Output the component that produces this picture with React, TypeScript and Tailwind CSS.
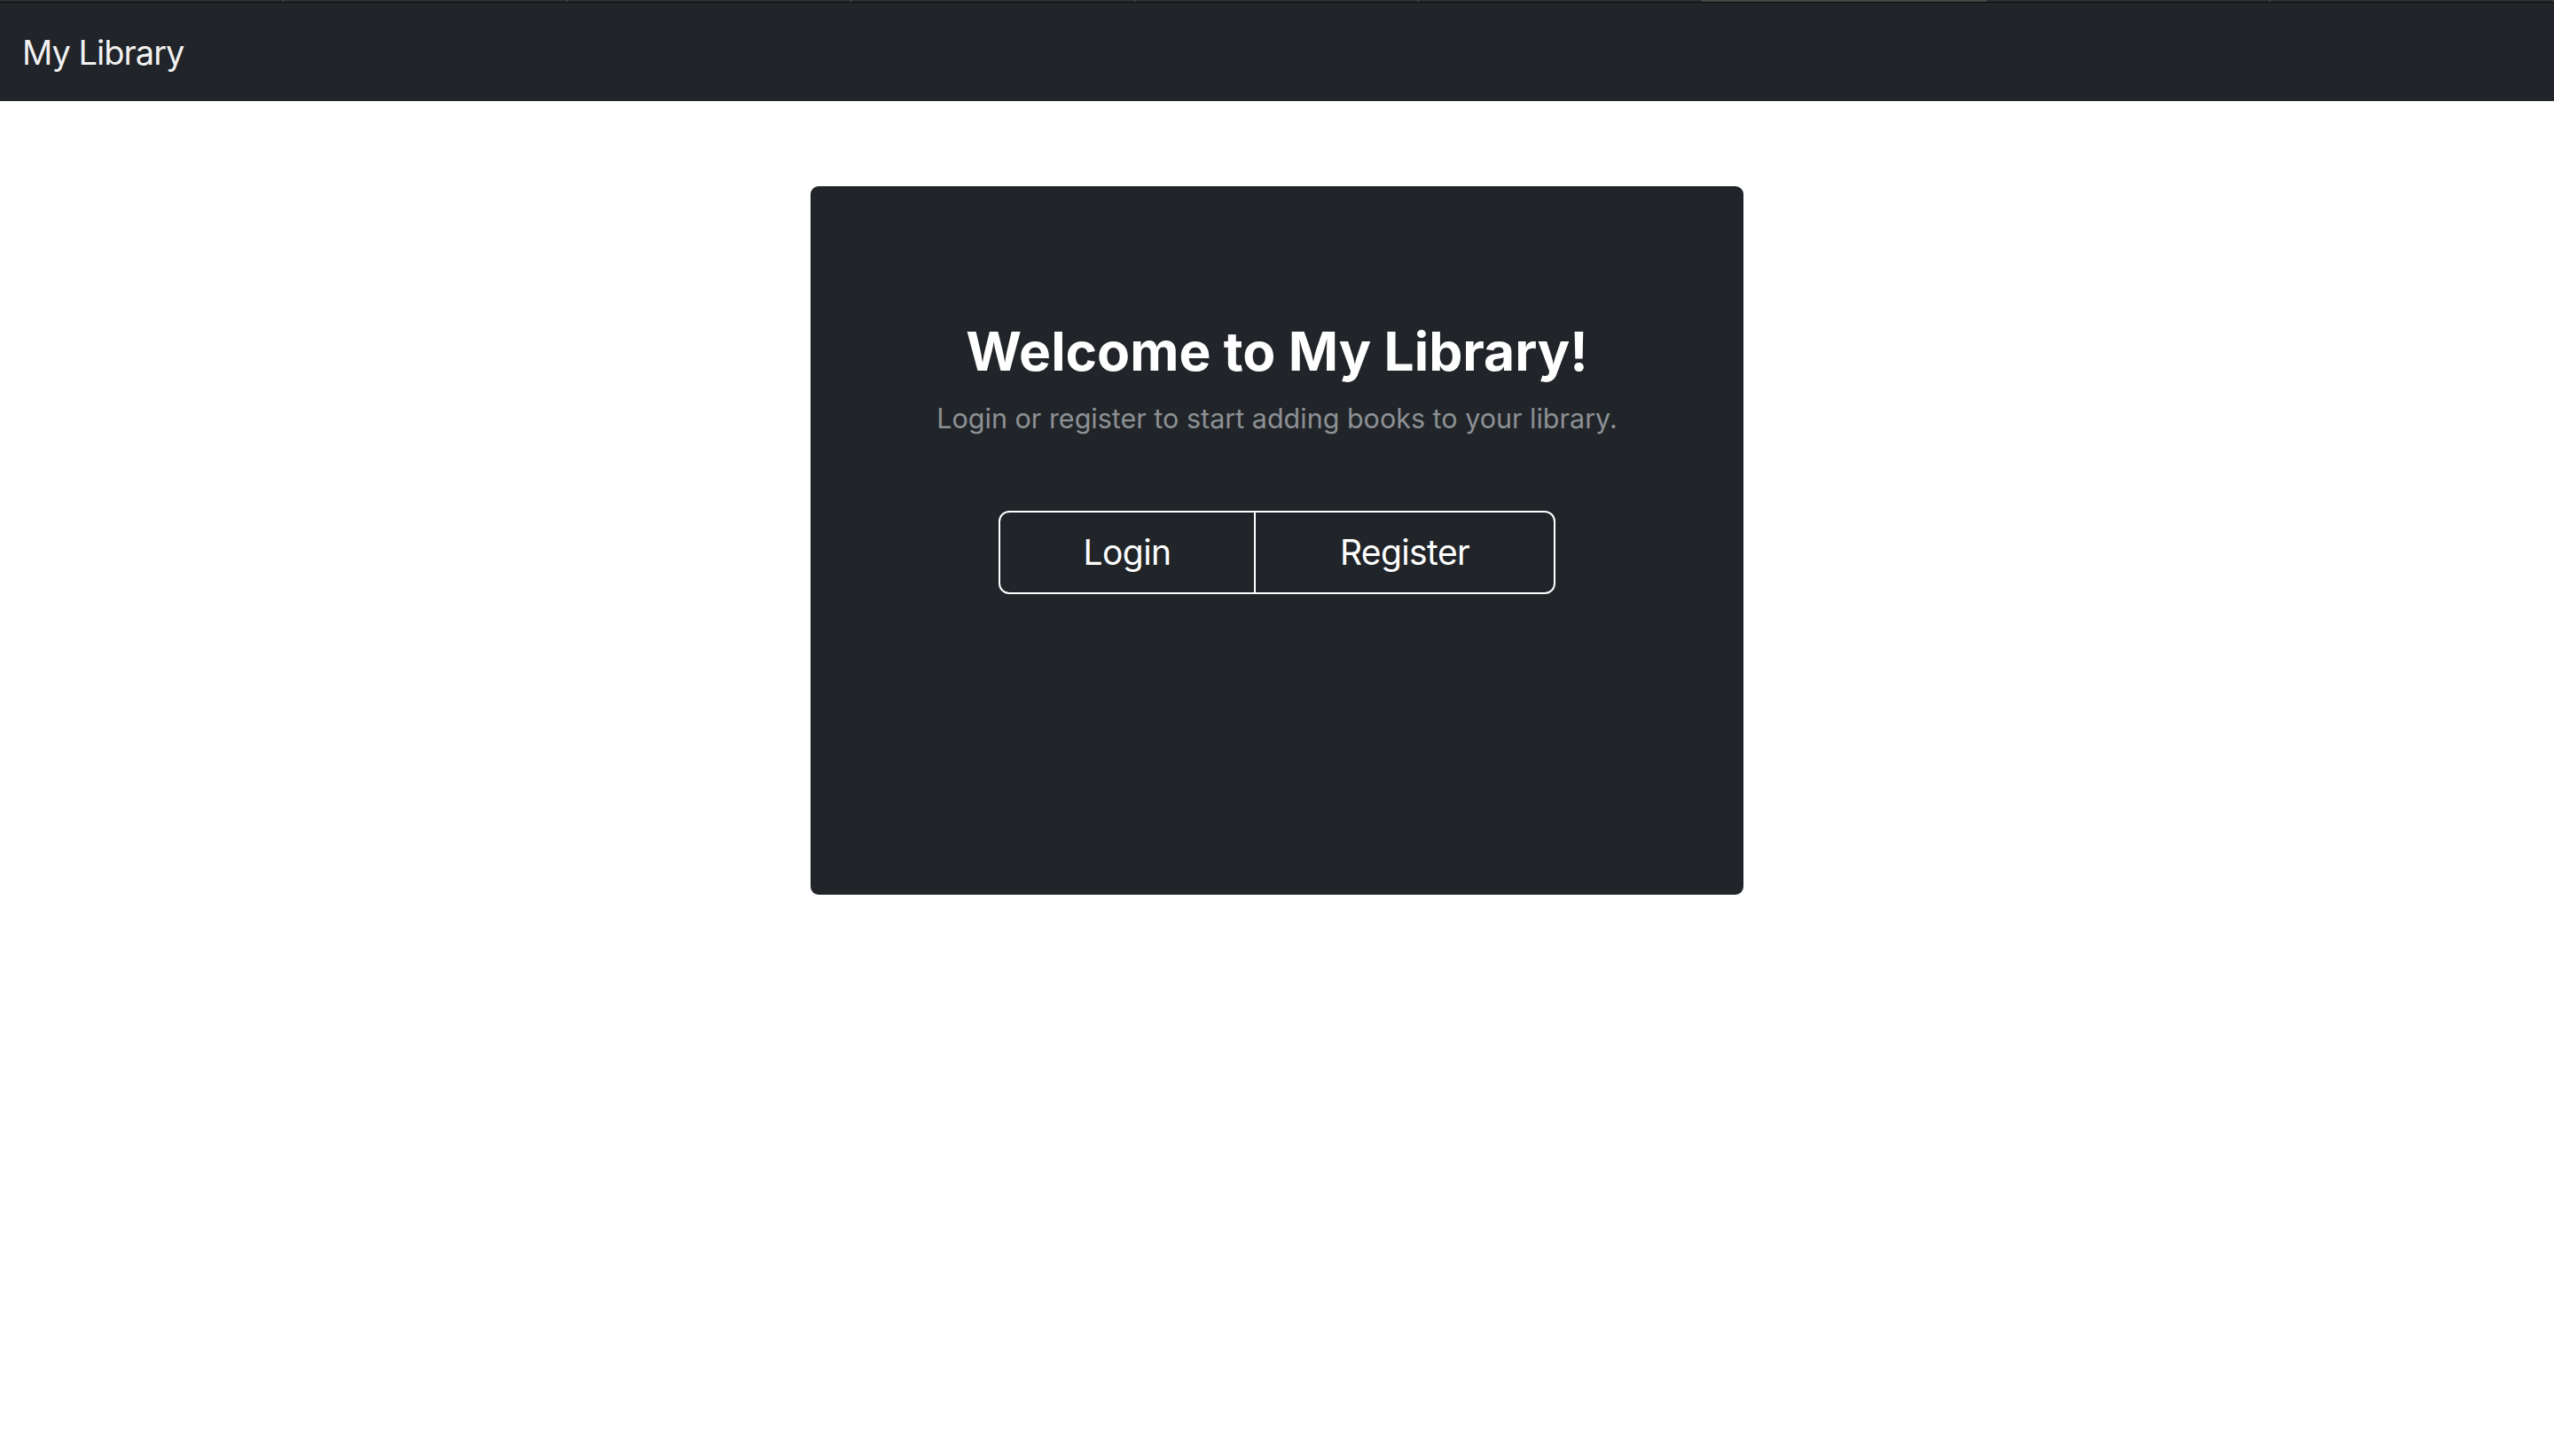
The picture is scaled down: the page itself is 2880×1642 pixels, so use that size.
import React from "react";

const segs = [0, 1, 2, 3, 4, 5, 6, 7, 8];

export default function App() {
  return (
    <div className="min-h-screen bg-white" style={{ fontFamily: "Inter, 'Noto Sans', sans-serif" }}>
      <div className="relative h-[114px] bg-[#212529]">
        <div className="absolute left-0 right-0 top-0 flex h-[2px] bg-[#2b2d30]">
          {segs.map((i) => (
            <div
              key={i}
              className={
                i === 6
                  ? "h-full w-[320px] shrink-0 border-r border-[#555] bg-[#454545]"
                  : "h-full w-[320px] shrink-0 border-r border-[#555]"
              }
            />
          ))}
        </div>
        <div className="absolute left-0 right-0 top-[2px] h-[1px] bg-[#0c0d0e]" />
        <div className="flex h-full items-center pl-[25px] pt-[4px]">
          <span className="text-[38px] leading-none tracking-[-1px] text-white/95">My Library</span>
        </div>
      </div>
      <div className="flex justify-center pt-[96px]">
        <div className="flex h-[799px] w-[1052px] flex-col items-center rounded-[9px] bg-[#212529] pt-[150px]">
          <h1 className="text-[60.5px] font-bold leading-[72px] text-white">
            Welcome to My Library!
          </h1>
          <p className="mt-[17px] text-[30.5px] leading-[45px] text-[#8d9094]">
            Login or register to start adding books to your library.
          </p>
          <div className="mt-[82px] flex h-[94px] rounded-[12px] border-2 border-white">
            <button className="flex w-[288px] items-center justify-center border-r-2 border-white text-[39px] tracking-[-0.6px] text-white">
              Login
            </button>
            <button className="flex w-[336px] items-center justify-center text-[39px] tracking-[-0.6px] text-white">
              Register
            </button>
          </div>
        </div>
      </div>
    </div>
  );
}
